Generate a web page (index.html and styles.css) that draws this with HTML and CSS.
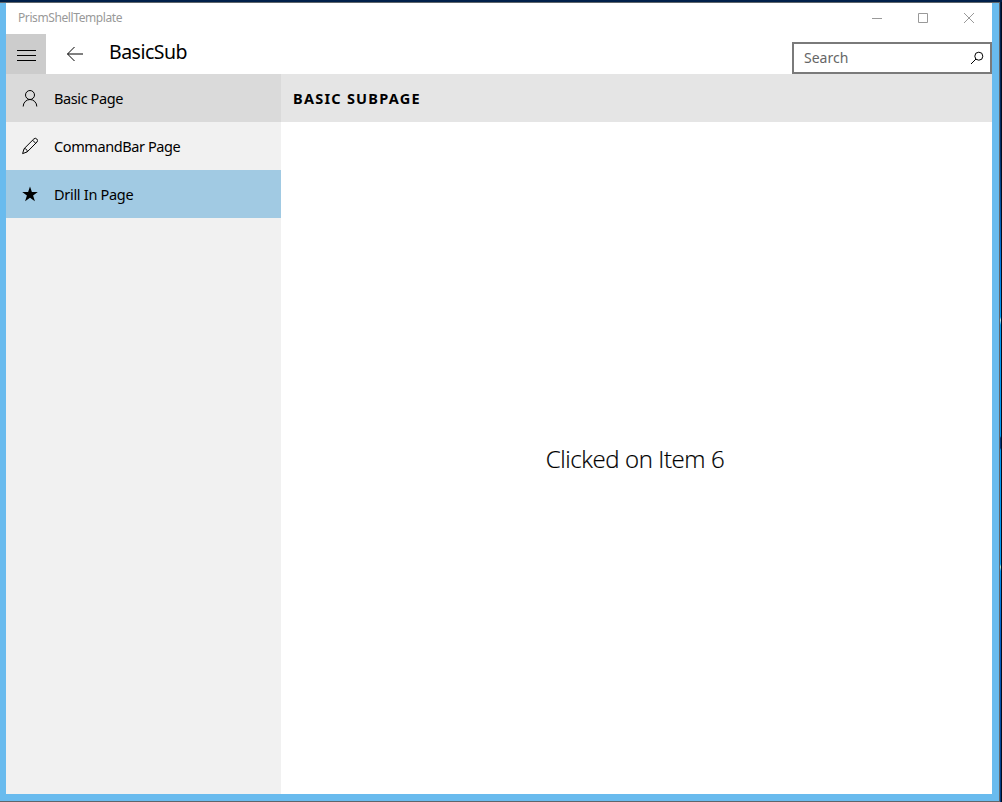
FILE: index.html
```
<!DOCTYPE html>
<html lang="en">
<head>
<meta charset="utf-8">
<title>PrismShellTemplate</title>
<link rel="stylesheet" href="styles.css">
</head>
<body>
<div class="desktop">
  <div class="frame">
    <div class="window">
      <header class="titlebar">
        <span class="app-name">PrismShellTemplate</span>
        <div class="controls">
          <svg width="46" height="31" viewBox="0 0 46 31"><path d="M18 15.500h10"/></svg>
          <svg width="46" height="31" viewBox="0 0 46 31"><path d="M18.500 10.500h9v9h-9z"/></svg>
          <svg width="46" height="31" viewBox="0 0 46 31"><path d="M18 10l10 10M28 10l-10 10"/></svg>
        </div>
      </header>
      <div class="toolbar">
        <button class="hamburger" aria-label="Menu"><svg width="40" height="40" viewBox="0 0 40 40"><path d="M11 16.500h19M11 21.500h19M11 26.500h19"/></svg></button>
        <svg class="back" width="20" height="20" viewBox="0 0 20 20"><path d="M2.500 10H18M9.500 3l-7 7 7 7"/></svg>
        <h1 class="title"><span>BasicSub</span></h1>
        <div class="search">
          <span>Search</span>
          <svg width="14" height="14" viewBox="0 0 14 14"><circle cx="8.800" cy="5.200" r="4"/><path d="M6 8L1 13"/></svg>
        </div>
      </div>
      <div class="body">
        <nav class="nav">
          <div class="item hover">
            <svg width="16" height="18" viewBox="0 0 16 18"><circle cx="8" cy="6" r="4.500"/><path d="M1.200 17.500a6.800 7 0 0 1 13.600 0"/></svg>
            <span class="basic">Basic Page</span>
          </div>
          <div class="item">
            <svg width="16" height="18" viewBox="0 0 16 18"><path d="M.6 16.600L2.100 11.700 11.800 2a2.100 2.100 0 0 1 3 0l.1.100a2.100 2.100 0 0 1 0 3L5.200 14.900zM2.100 11.700a2.700 2.700 0 0 1 3.100 3.200M10.600 3.200l3 3"/></svg>
            <span class="command">CommandBar Page</span>
          </div>
          <div class="item selected">
            <svg width="16" height="18" viewBox="0 0 16 18"><path class="solid" d="M8 1.600l1.900 5.500h5.900l-4.700 3.500 1.800 5.700L8 12.800l-4.900 3.500 1.800-5.700L.2 7.100h5.900z"/></svg>
            <span class="drill">Drill In Page</span>
          </div>
        </nav>
        <main class="content">
          <h2 class="page-header"><span>BASIC SUBPAGE</span></h2>
          <div class="message"><span>Clicked on Item 6</span></div>
        </main>
      </div>
    </div>
  </div>
  <div class="wallpaper"></div>
</div>
</body>
</html>
```
FILE: styles.css
```
* { box-sizing: border-box; }
body {
  margin: 0;
  width: 1002px;
  height: 802px;
  overflow: hidden;
  color: #000;
  font-family: "Noto Sans", "Open Sans", sans-serif;
}
svg { display: block; flex: none; fill: none; stroke: #000; stroke-width: 1; }
.desktop { display: flex; height: 802px; padding-top: 2px; background: #00204a; }
.frame {
  width: 1000px;
  height: 800px;
  padding: 0 7px 7px 6px;
  background: #69bbee;
  border: solid #60666b;
  border-width: 1px 1px 1px 0;
}
.window { display: flex; flex-direction: column; height: 791px; background: #fff; }
.wallpaper {
  width: 2px;
  border-right: 1px solid #000c20;
  background: linear-gradient(#00204a 0, #00306a 150px, #0078e0 260px, #0098f0 315px, #c0e8f0 318px, #0098f0 323px, #0098f0 434px, #003a80 436px, #003a80 446px, #0098f0 448px, #0098f0 562px, #c0e8d0 565px, #0090f0 569px, #0060c8 630px, #003a80 798px);
}
.titlebar { display: flex; justify-content: space-between; height: 31px; padding-left: 12px; }
.titlebar svg { stroke: #999; }
.app-name { font-size: 12px; line-height: 30px; color: #999; letter-spacing: -.4px; }
.controls { display: flex; }
.toolbar { display: flex; height: 40px; }
.hamburger { width: 40px; height: 40px; padding: 0; border: 0; background: #ccc; }
.back { margin: 10px 0 0 19px; }
.title { flex: 1; margin: 0 0 0 24px; font-size: 19.500px; line-height: 35px; font-weight: 400; letter-spacing: -.5px; }
.search {
  display: flex;
  justify-content: space-between;
  width: 200px;
  height: 32px;
  margin-top: 8px;
  padding: 0 6px 0 10px;
  border: 2px solid #7a7a7a;
  font-size: 14px;
  line-height: 28px;
  color: #666;
}
.search svg { margin-top: 7px; }
.body { display: flex; flex: 1; }
.nav { width: 275px; background: #f1f1f1; }
.item { display: flex; align-items: center; gap: 16px; height: 48px; padding-left: 16px; font-size: 14.500px; white-space: nowrap; }
.item span { line-height: 20px; letter-spacing: -.4px; padding-bottom: 1px; }
.item .drill { letter-spacing: -.3px; }
.item .solid { fill: #000; stroke: none; }
.hover { background: #dadada; }
.selected { background: #a1cae3; }
.content { display: flex; flex: 1; flex-direction: column; }
.page-header { height: 48px; margin: 0; padding-left: 12px; background: #e5e5e5; font-size: 14.500px; line-height: 49px; font-weight: 700; letter-spacing: 1.250px; }
.message { display: flex; flex: 1; align-items: center; justify-content: center; padding-right: 3px; font-family: "Open Sans", "Noto Sans", sans-serif; font-size: 24px; font-weight: 300; letter-spacing: -.4px; -webkit-text-stroke: .2px #000; }
```
